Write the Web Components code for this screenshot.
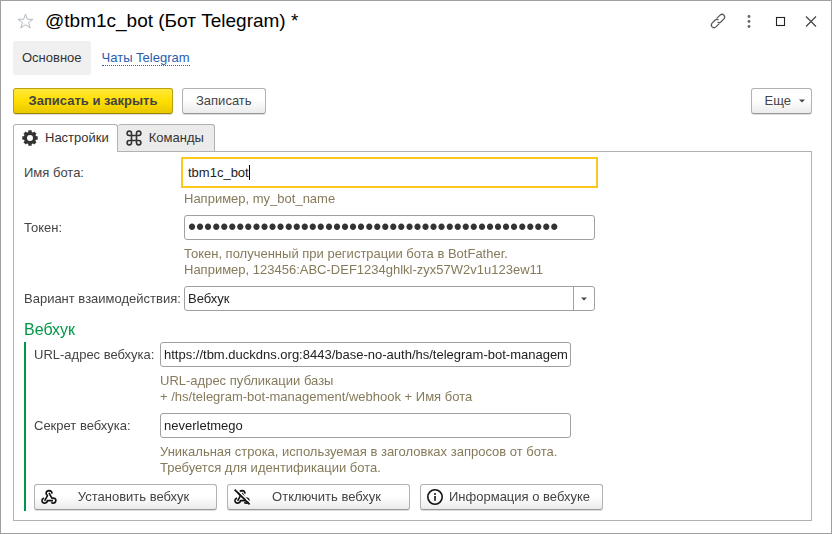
<!DOCTYPE html>
<html lang="ru">
<head>
<meta charset="utf-8">
<title>@tbm1c_bot (Бот Telegram) *</title>
<style>
    html, body {
        height: 100%;
        margin: 0;
    }
    body {
        background: #fff;
        color: #444;
        font: 13px/16px "Liberation Sans", Arial, sans-serif;
    }
</style>
</head>
<body>
<bot-window></bot-window>

<script>
const ICONS = {
    star: `<path d="M8.5 1 10.3 6.3H16L11.5 9.6 13.2 15 8.5 11.7 3.8 15 5.5 9.6 1 6.3H6.7Z" fill="none" stroke="#b4b9be" stroke-width="1"/>`,
    link: `<g fill="none" stroke="#555" stroke-width="1.2" stroke-linecap="round" stroke-linejoin="round">
        <path d="M7 5.2 10.1 2.1Q12 .4 13.9 2.1 15.6 4 13.9 5.9L10.8 9Q9.4 10.2 7.8 9.3"/>
        <path d="M9 10.8 5.9 13.9Q4 15.6 2.1 13.9 .4 12 2.1 10.1L5.2 7Q6.6 5.8 8.2 6.7"/></g>`,
    dots: `<g fill="#666"><circle cx="8" cy="3.5" r="1.4"/><circle cx="8" cy="8.5" r="1.4"/><circle cx="8" cy="13.5" r="1.4"/></g>`,
    square: `<rect x="4.5" y="4.5" width="8" height="8" fill="none" stroke="#222" stroke-width="1.1"/>`,
    close: `<path d="M3 3.5 13 13.5M13 3.5 3 13.5" fill="none" stroke="#444" stroke-width="1.2"/>`,
    gear: `<circle cx="8" cy="8" r="4.6" fill="none" stroke="#333" stroke-width="3.2"/>
        <g stroke="#333" stroke-width="3.4"><path d="M8 .3V3M8 13V15.7M.3 8H3M13 8H15.7M2.6 2.6 4.4 4.4M11.6 11.6 13.4 13.4M2.6 13.4 4.4 11.6M11.6 4.4 13.4 2.6"/></g>`,
    command: `<path d="M5.5 5.5V3.2A2.2 2.2 0 1 0 3.2 5.5H12.8A2.2 2.2 0 1 0 10.5 3.2V12.8A2.2 2.2 0 1 0 12.8 10.5H3.2A2.2 2.2 0 1 0 5.5 12.8Z" fill="none" stroke="#333" stroke-width="1.6"/>`,
    webhook: `<g fill="none" stroke="#111" stroke-width="1.6" stroke-linejoin="round">
        <path d="M11.1 4.6Q10.8 1.7 8.1 1.6 5.2 1.8 5.1 4.4 5.2 5.6 6.5 6.6L3.6 11.8"/>
        <path d="M8 4 10.9 9.2Q14.8 8.6 14.9 11.4 14.6 14.2 12 14.2L10.2 13.6"/>
        <path d="M3 8.9Q.7 9.9 .9 11.8 1.4 14.2 3.9 14.1 6.2 13.8 6.4 11.6H12"/></g>`,
    info: `<circle cx="8" cy="8" r="7.2" fill="none" stroke="#111" stroke-width="1.6"/>
        <circle cx="8" cy="5" r="1" fill="#111"/><path d="M8 7V11.8" stroke="#111" stroke-width="1.6"/>`,
    arrow: `<path d="M5 6.5H11L8 9.5Z" fill="#444"/>`
};
ICONS.webhookOff = ICONS.webhook + `<path d="M2.4 0 16.6 14" stroke="#fff" stroke-width="1.4"/><path d="M.6 .6 15.6 15.4" stroke="#111" stroke-width="1.7"/>`;

class UiIcon extends HTMLElement {
    connectedCallback() {
        const root = this.attachShadow({ mode: 'open' });
        root.innerHTML = `
            <style>
                :host { display: block; flex: none; height: 16px; width: 16px; }
                svg { display: block; height: 100%; overflow: visible; width: 100%; }
            </style>
            <svg viewBox="0 0 16 16" aria-hidden="true">${ICONS[this.getAttribute('name')]}</svg>
        `;
    }
}

class UiButton extends HTMLElement {
    connectedCallback() {
        const icon = this.getAttribute('icon');
        const root = this.attachShadow({ mode: 'open' });
        root.innerHTML = `
            <style>
                :host { display: block; }
                button {
                    align-items: center;
                    background: linear-gradient(#fff 45%, #ebebeb);
                    border: 1px solid #b2b2b2;
                    border-bottom-color: #989898;
                    border-radius: 3px;
                    box-sizing: border-box;
                    box-shadow: 0 1px 0 #ddd;
                    color: #444;
                    display: flex;
                    font: inherit;
                    height: 26px;
                    padding: 0 13px;
                    width: 100%;
                }
                span { flex: 1; text-align: center; white-space: nowrap; }
                :host([primary]) button {
                    background: linear-gradient(#ffe83a, #ffdf00 50%, #e8c800);
                    border-color: #b8a010;
                    border-bottom-color: #9c8600;
                    font-weight: bold;
                }
                :host([icon]) button { padding: 0 6px; }
                :host([menu]) button { gap: 3px; padding: 0 1px 0 13px; }
            </style>
            <button type="button">
                ${icon ? `<ui-icon name="${icon}"></ui-icon>` : ''}
                <span><slot></slot></span>
                ${this.hasAttribute('menu') ? '<ui-icon name="arrow"></ui-icon>' : ''}
            </button>
        `;
    }
}

class FormField extends HTMLElement {
    connectedCallback() {
        const root = this.attachShadow({ mode: 'open' });
        root.innerHTML = `
            <style>
                :host {
                    column-gap: 4px;
                    display: grid;
                    grid-template-columns: var(--label-width) minmax(0, 411px);
                    row-gap: 6px;
                }
                label { line-height: 25px; white-space: nowrap; }
                .control { display: grid; }
                input, select {
                    appearance: none;
                    background: #fff;
                    border: 1px solid #a0a0a0;
                    border-radius: 3px;
                    box-sizing: border-box;
                    color: #222;
                    font: inherit;
                    grid-area: 1 / 1;
                    height: 25px;
                    margin: 0;
                    min-width: 0;
                    padding: 0 3px;
                    width: 100%;
                }
                input[type=password] { color: #333; font-size: 23px; line-height: 23px; }
                input:focus {
                    border-color: transparent;
                    border-radius: 0;
                    caret-color: transparent;
                    outline: 2px solid #fcc81e;
                    outline-offset: 1px;
                }
                .caret {
                    align-self: center;
                    background: #000;
                    display: none;
                    grid-area: 1 / 1;
                    height: 15px;
                    margin-left: 65px;
                    pointer-events: none;
                    width: 1px;
                    z-index: 1;
                }
                input:focus + .caret { display: block; }
                .drop {
                    align-items: center;
                    border-left: 1px solid #a0a0a0;
                    display: flex;
                    grid-area: 1 / 1;
                    justify-content: center;
                    justify-self: end;
                    margin: 1px;
                    pointer-events: none;
                    width: 20px;
                }
                .hint { color: #857a5a; grid-column: 2; }
            </style>
            <label for="control">${this.getAttribute('label')}</label>
            <div class="control">${this.control()}</div>
            ${this.childNodes.length ? '<div class="hint"><slot></slot></div>' : ''}
        `;
        if (this.hasAttribute('active')) {
            const input = root.querySelector('input');
            input.focus();
            input.setSelectionRange(input.value.length, input.value.length);
        }
    }

    control() {
        const value = this.getAttribute('value');
        if (this.getAttribute('type') === 'select') {
            return `
                <select id="control"><option>${value}</option></select>
                <span class="drop"><ui-icon name="arrow"></ui-icon></span>
            `;
        }
        return `
            <input id="control" type="${this.getAttribute('type') || 'text'}" value="${value}" spellcheck="false">
            ${this.hasAttribute('active') ? '<span class="caret"></span>' : ''}
        `;
    }
}

class TabPanel extends HTMLElement {
    connectedCallback() {
        const root = this.attachShadow({ mode: 'open' });
        root.innerHTML = `
            <style>
                :host { display: flex; flex: 1; flex-direction: column; }
                .tabs { display: flex; }
                button {
                    align-items: center;
                    background: #ebebeb;
                    border: 1px solid #b2b2b2;
                    border-bottom: 0;
                    border-radius: 3px 3px 0 0;
                    box-sizing: border-box;
                    color: #333;
                    display: flex;
                    font: inherit;
                    gap: 7px;
                    height: 27px;
                    padding: 0 10px 0 8px;
                }
                button + button { border-left: 0; }
                button[aria-selected=true] {
                    background: #fff;
                    height: 28px;
                    margin-bottom: -1px;
                    padding: 0 8px 1px;
                    z-index: 1;
                }
                .panel {
                    border: 1px solid #b2b2b2;
                    flex: 1;
                    padding: 8px 10px 9px;
                }
            </style>
            <div class="tabs" role="tablist">
                <button type="button" role="tab" aria-selected="true"><ui-icon name="gear"></ui-icon>Настройки</button>
                <button type="button" role="tab" aria-selected="false"><ui-icon name="command"></ui-icon>Команды</button>
            </div>
            <div class="panel" role="tabpanel"><slot></slot></div>
        `;
    }
}

class TitleBar extends HTMLElement {
    connectedCallback() {
        const root = this.attachShadow({ mode: 'open' });
        root.innerHTML = `
            <style>
                :host { align-items: center; display: flex; height: 40px; }
                h1 { color: #000; flex: 1; font-size: 19px; font-weight: normal; line-height: 24px; margin: 0 0 0 12px; }
                button { background: none; border: 0; padding: 0; }
                .tools { display: flex; gap: 15px; margin-right: -7px; }
            </style>
            <button type="button" aria-label="В избранное"><ui-icon name="star"></ui-icon></button>
            <h1><slot></slot></h1>
            <div class="tools">
                <button type="button" aria-label="Ссылка"><ui-icon name="link"></ui-icon></button>
                <button type="button" aria-label="Меню"><ui-icon name="dots"></ui-icon></button>
                <button type="button" aria-label="Развернуть"><ui-icon name="square"></ui-icon></button>
                <button type="button" aria-label="Закрыть"><ui-icon name="close"></ui-icon></button>
            </div>
        `;
    }
}

class BotWindow extends HTMLElement {
    connectedCallback() {
        const root = this.attachShadow({ mode: 'open' });
        root.innerHTML = `
            <style>
                :host {
                    border: 1px solid #a0a0a0;
                    box-sizing: border-box;
                    display: flex;
                    flex-direction: column;
                    min-height: 100%;
                    padding: 0 19px 12px 12px;
                }
                title-bar { margin-left: 4px; }
                nav { align-items: center; display: flex; gap: 11px; }
                nav a { border-bottom: 1px dotted; color: #2a5db0; line-height: 14px; text-decoration: none; }
                nav a[aria-current] {
                    background: #f0f0f0;
                    border: 0;
                    border-radius: 3px;
                    color: #333;
                    line-height: 34px;
                    padding: 0 9px;
                }
                .commands { display: flex; gap: 9px; margin: 13px 0 10px; }
                .commands :first-child { min-width: 160px; }
                .commands :last-child { margin-left: auto; }
                .form, .group { display: flex; flex-direction: column; gap: 8px; }
                .form { --label-width: 156px; }
                h2 { color: #009846; font-size: 16px; font-weight: normal; line-height: 20px; margin: 1px 0 -6px; }
                .group { --label-width: 122px; border-left: 2px solid #009846; padding: 0 0 1px 8px; }
                .actions { display: flex; gap: 10px; }
                .actions ui-button { flex: 0 1 183px; }
            </style>
            <title-bar>@tbm1c_bot (Бот Telegram) *</title-bar>
            <nav>
                <a href="#main" aria-current="page">Основное</a>
                <a href="#chats">Чаты Telegram</a>
            </nav>
            <div class="commands">
                <ui-button primary>Записать и закрыть</ui-button>
                <ui-button>Записать</ui-button>
                <ui-button menu>Еще</ui-button>
            </div>
            <tab-panel>
                <div class="form">
                    <form-field label="Имя бота:" value="tbm1c_bot" active>Например, my_bot_name</form-field>
                    <form-field label="Токен:" type="password" value="${'•'.repeat(46)}">Токен, полученный при регистрации бота в BotFather.<br>Например, 123456:ABC-DEF1234ghlkl-zyx57W2v1u123ew11</form-field>
                    <form-field label="Вариант взаимодействия:" type="select" value="Вебхук"></form-field>
                    <h2>Вебхук</h2>
                    <div class="group">
                        <form-field label="URL-адрес вебхука:" value="https://tbm.duckdns.org:8443/base-no-auth/hs/telegram-bot-managem">URL-адрес публикации базы<br>+ /hs/telegram-bot-management/webhook + Имя бота</form-field>
                        <form-field label="Секрет вебхука:" value="neverletmego">Уникальная строка, используемая в заголовках запросов от бота.<br>Требуется для идентификации бота.</form-field>
                        <div class="actions">
                            <ui-button icon="webhook">Установить вебхук</ui-button>
                            <ui-button icon="webhookOff">Отключить вебхук</ui-button>
                            <ui-button icon="info">Информация о вебхуке</ui-button>
                        </div>
                    </div>
                </div>
            </tab-panel>
        `;
    }
}

customElements.define('ui-icon', UiIcon);
customElements.define('ui-button', UiButton);
customElements.define('form-field', FormField);
customElements.define('tab-panel', TabPanel);
customElements.define('title-bar', TitleBar);
customElements.define('bot-window', BotWindow);
</script>
</body>
</html>
